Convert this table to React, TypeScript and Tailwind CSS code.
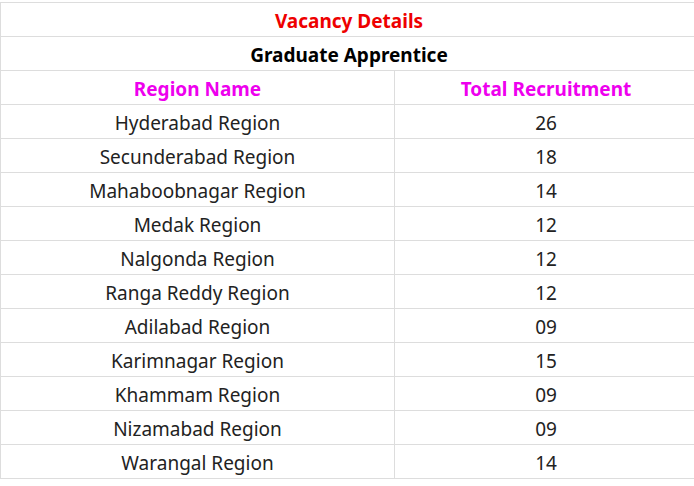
const rows: [string, string][] = [
  ["Hyderabad Region", "26"],
  ["Secunderabad Region", "18"],
  ["Mahaboobnagar Region", "14"],
  ["Medak Region", "12"],
  ["Nalgonda Region", "12"],
  ["Ranga Reddy Region", "12"],
  ["Adilabad Region", "09"],
  ["Karimnagar Region", "15"],
  ["Khammam Region", "09"],
  ["Nizamabad Region", "09"],
  ["Warangal Region", "14"],
];

export default function App() {
  return (
    <div className="w-[694px] h-[486px] overflow-hidden bg-white pt-[2px] font-['Noto_Sans',sans-serif]">
      <table className="w-[698px] border-collapse text-[19px] text-[#222]">
        <tbody>
          <tr className="h-[34px]">
            <td colSpan={2} className="border border-[#ddd] pt-[4px] text-center font-bold text-[#ee0000] leading-none">
              Vacancy Details
            </td>
          </tr>
          <tr className="h-[34px]">
            <td colSpan={2} className="border border-[#ddd] pt-[4px] text-center font-bold text-black leading-none">
              Graduate Apprentice
            </td>
          </tr>
          <tr className="h-[34px]">
            <td className="w-[394px] border border-[#ddd] pt-[4px] text-center font-bold text-[#ee00ee] leading-none">
              Region Name
            </td>
            <td className="border border-[#ddd] pt-[4px] text-center font-bold text-[#ee00ee] leading-none">
              Total Recruitment
            </td>
          </tr>
          {rows.map(([name, total]) => (
            <tr key={name} className="h-[34px]">
              <td className="border border-[#ddd] pt-[4px] text-center leading-none">{name}</td>
              <td className="border border-[#ddd] pt-[4px] text-center leading-none">{total}</td>
            </tr>
          ))}
        </tbody>
      </table>
    </div>
  );
}
